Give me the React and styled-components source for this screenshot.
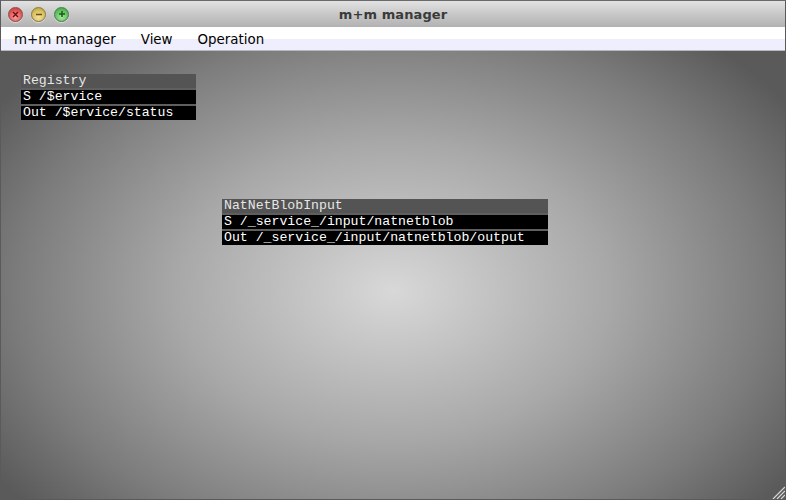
import React from "react";
import styled, { createGlobalStyle } from "styled-components";

const Global = createGlobalStyle`
  html, body { margin: 0; padding: 0; background: #6a6a6a; }
  #root { width: 786px; height: 500px; }
`;

const Window = styled.div`
  width: 786px;
  height: 500px;
  box-sizing: border-box;
  display: flex;
  flex-direction: column;
  border: 1px solid #5a5a5a;
  border-top-color: #6a6a6a;
  overflow: hidden;
  font-family: "DejaVu Sans", "Liberation Sans", sans-serif;
`;

const TitleBar = styled.div`
  height: 26px;
  flex: none;
  display: flex;
  align-items: center;
  position: relative;
  background: linear-gradient(#e2e2e2, #c8c8c8 50%, #b2b2b2);
`;

const Lights = styled.div`
  display: flex;
  gap: 8px;
  padding-left: 7px;
`;

const Light = styled.div`
  width: 15px;
  height: 15px;
  border-radius: 50%;
  box-sizing: border-box;
  border: 1px solid ${(p) => p.$ring};
  background: radial-gradient(circle at 50% 70%, ${(p) => p.$light} 0%, ${(p) => p.$base} 60%, ${(p) => p.$dark} 100%);
  display: flex;
  align-items: center;
  justify-content: center;
  box-shadow: 0 1px 1px rgba(255,255,255,0.5);
`;

const Title = styled.div`
  position: absolute;
  left: 0;
  right: 0;
  text-align: center;
  font-weight: bold;
  font-size: 13px;
  color: #3a3a3a;
  letter-spacing: 0.1px;
  pointer-events: none;
`;

const MenuBar = styled.div`
  height: 23px;
  flex: none;
  display: flex;
  align-items: center;
  gap: 25px;
  padding-left: 13px;
  background: linear-gradient(#ffffff 0%, #ffffff 50%, #eeeefc 50%, #eeeefc 100%);
  border-bottom: 1px solid #b8b8c0;
`;

const MenuItem = styled.span`
  font-size: 13.4px;
  color: #000;
  padding-top: 1px;
`;

const Canvas = styled.div`
  flex: 1;
  position: relative;
  background: radial-gradient(ellipse 480px 330px at 392px 240px, #d8d8d8 0%, #a8a8a8 45%, #7c7c7c 78%, #5a5a5a 100%);
`;

const Node = styled.div`
  position: absolute;
  left: ${(p) => p.$x}px;
  top: ${(p) => p.$y}px;
  width: ${(p) => p.$w}px;
  display: flex;
  flex-direction: column;
  font-family: "Liberation Mono", "Courier New", monospace;
  font-size: 13.2px;
`;

const NodeRow = styled.div`
  height: 14px;
  line-height: 14px;
  padding-left: 2px;
  white-space: nowrap;
  background: ${(p) => (p.$header ? "#545454" : "#000")};
  color: ${(p) => (p.$header ? "#e6e6e6" : "#fff")};
  & + & {
    border-top: 2px solid rgba(210, 210, 210, 0.45);
  }
`;

const Grip = styled.svg`
  position: absolute;
  right: 0;
  bottom: 0;
`;

const nodes = [
  { x: 20, y: 23, w: 175, title: "Registry", rows: ["S /$ervice", "Out /$ervice/status"] },
  {
    x: 221,
    y: 148,
    w: 326,
    title: "NatNetBlobInput",
    rows: ["S /_service_/input/natnetblob", "Out /_service_/input/natnetblob/output"],
  },
];

export default function App() {
  return (
    <>
      <Global />
      <Window>
        <TitleBar>
          <Lights>
            <Light $ring="#8a4a4a" $base="#e05656" $light="#f4a0a0" $dark="#b83838">
              <svg width="7" height="7" viewBox="0 0 7 7">
                <path d="M1 1L6 6M6 1L1 6" stroke="#6a1010" strokeWidth="1.4" />
              </svg>
            </Light>
            <Light $ring="#8a7a40" $base="#d8bc5a" $light="#f2e2a0" $dark="#b09030">
              <svg width="8" height="7" viewBox="0 0 8 7">
                <path d="M1 3.5H7" stroke="#6a5010" strokeWidth="1.5" />
              </svg>
            </Light>
            <Light $ring="#4a7a4a" $base="#5cbf5c" $light="#a8e6a0" $dark="#3a9a3a">
              <svg width="8" height="8" viewBox="0 0 8 8">
                <path d="M1 4H7M4 1V7" stroke="#1a5a1a" strokeWidth="1.5" />
              </svg>
            </Light>
          </Lights>
          <Title>m+m manager</Title>
        </TitleBar>
        <MenuBar>
          <MenuItem>m+m manager</MenuItem>
          <MenuItem>View</MenuItem>
          <MenuItem>Operation</MenuItem>
        </MenuBar>
        <Canvas>
          {nodes.map((n) => (
            <Node key={n.title} $x={n.x} $y={n.y} $w={n.w}>
              <NodeRow $header>{n.title}</NodeRow>
              {n.rows.map((r) => (
                <NodeRow key={r}>{r}</NodeRow>
              ))}
            </Node>
          ))}
          <Grip width="16" height="16" viewBox="0 0 16 16">
            <path d="M4 16L16 4M8 16L16 8M12 16L16 12" stroke="#d8d8d8" strokeWidth="1.2" />
          </Grip>
        </Canvas>
      </Window>
    </>
  );
}
